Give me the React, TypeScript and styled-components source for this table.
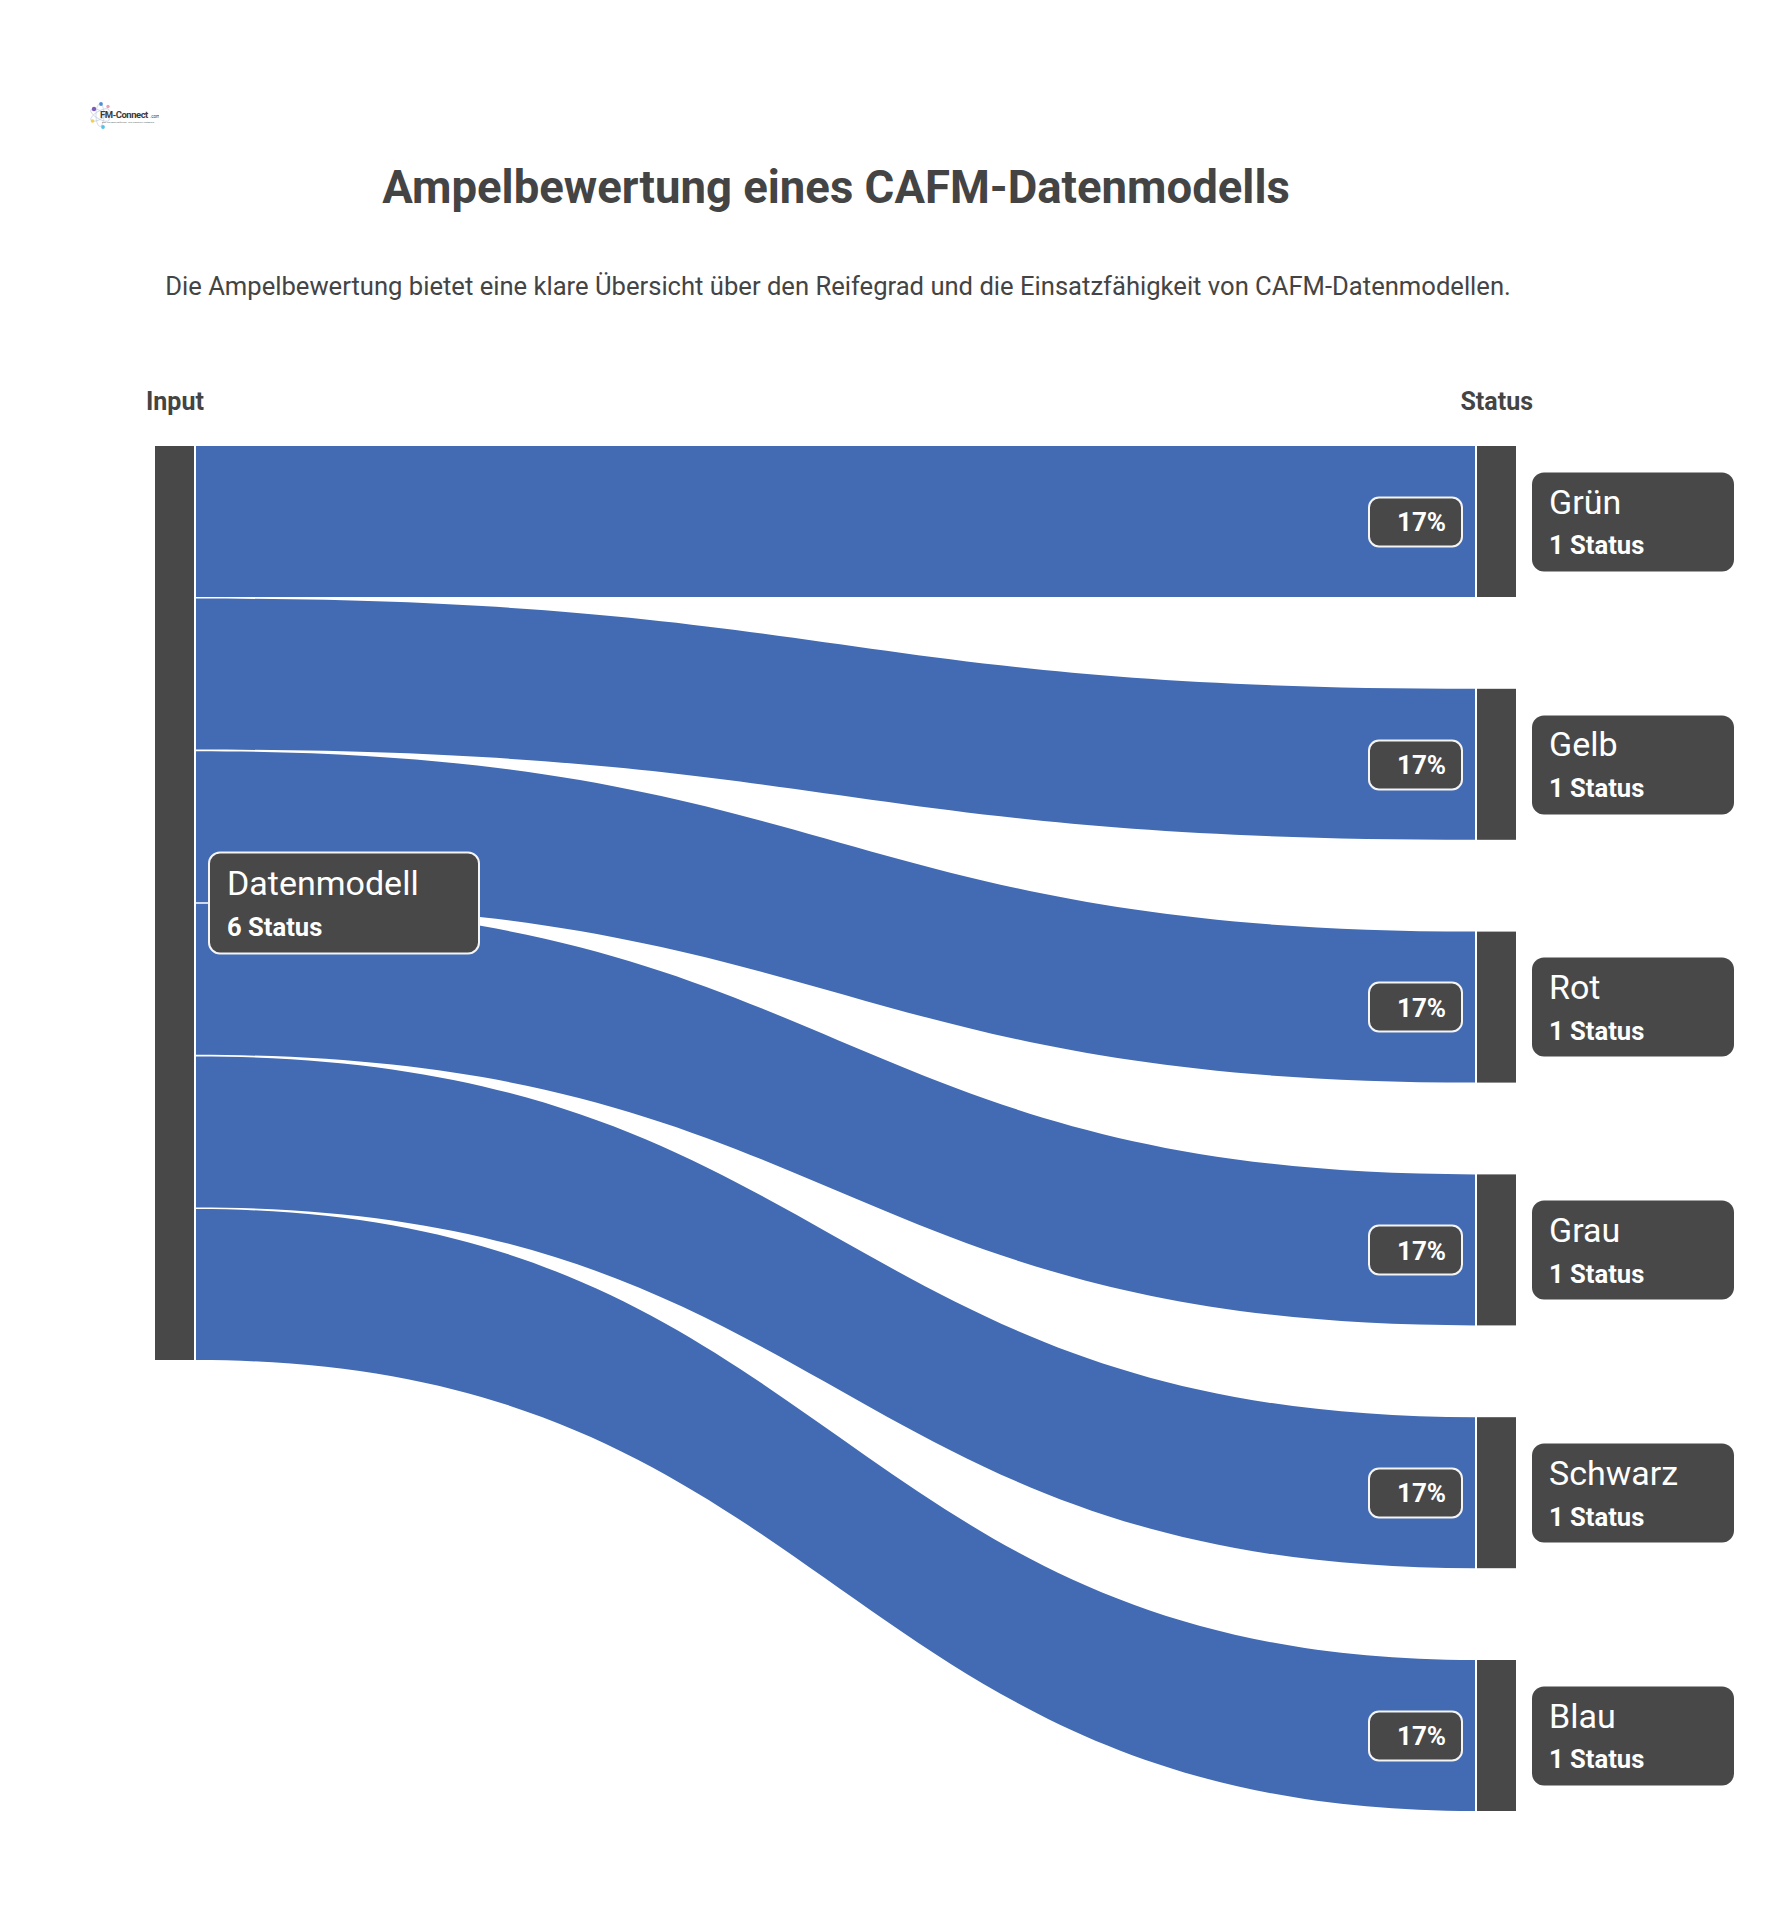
import styled, { createGlobalStyle } from "styled-components";

const GlobalStyle = createGlobalStyle`
  * {
    box-sizing: border-box;
  }
  body {
    margin: 0;
    background: #ffffff;
    font-family: Roboto, "Liberation Sans", Arial, sans-serif;
    color: #444444;
  }
`;

const BLUE = "#426bb3";
const DARK = "#484848";

const BAND_START = 196;
const BAND_END = 1475;
const BAND_HEIGHT = 151;
const LEFT_STEP = 152.6;
const RIGHT_STEP = 242.8;
const CHART_HEIGHT = 1365;

const statuses = [
  { name: "Grün", count: "1 Status", share: "17%" },
  { name: "Gelb", count: "1 Status", share: "17%" },
  { name: "Rot", count: "1 Status", share: "17%" },
  { name: "Grau", count: "1 Status", share: "17%" },
  { name: "Schwarz", count: "1 Status", share: "17%" },
  { name: "Blau", count: "1 Status", share: "17%" },
];

const Page = styled.div`
  width: 1790px;
  min-height: 1920px;
  padding-bottom: 110px;
`;

const LogoRow = styled.div`
  padding: 100px 0 0 89px;
  height: 132px;
`;

const Title = styled.h1`
  width: 1672px;
  margin: 29px 0 0;
  font-size: 45.5px;
  line-height: 1.2;
  font-weight: 700;
  text-align: center;
  color: #444444;
`;

const Subtitle = styled.p`
  width: 1676px;
  margin: 55px 0 0;
  font-size: 25.6px;
  line-height: 1.2;
  font-weight: 400;
  text-align: center;
  color: #444444;
`;

const ColumnLabels = styled.div`
  display: flex;
  justify-content: space-between;
  margin-top: 86px;
  padding: 0 257px 0 146px;
`;

const ColumnLabel = styled.span`
  font-size: 25px;
  line-height: 1.2;
  font-weight: 700;
  color: #444444;
`;

const Chart = styled.div`
  position: relative;
  margin-top: 29px;
  width: 1790px;
  height: ${CHART_HEIGHT}px;
`;

const Flows = styled.svg`
  display: block;
`;

const NodeBox = styled.div<{ $left: number; $top: number; $width: number; $height: number; $outlined?: boolean }>`
  position: absolute;
  left: ${(p) => p.$left}px;
  top: ${(p) => p.$top}px;
  width: ${(p) => p.$width}px;
  height: ${(p) => p.$height}px;
  transform: translateY(-50%);
  display: flex;
  flex-direction: column;
  justify-content: center;
  gap: 8px;
  padding: 0 17px 2px;
  background: ${DARK};
  border-radius: 12px;
  border: ${(p) => (p.$outlined ? "2px solid #f4f4f4" : "none")};
  color: #ffffff;
`;

const NodeName = styled.span`
  font-size: 34px;
  line-height: 1.2;
  font-weight: 400;
`;

const NodeCount = styled.span`
  font-size: 25.6px;
  line-height: 1.2;
  font-weight: 700;
`;

const SharePill = styled.div<{ $top: number }>`
  position: absolute;
  left: 1368px;
  top: ${(p) => p.$top}px;
  width: 95px;
  height: 51px;
  transform: translateY(-50%);
  display: flex;
  align-items: center;
  padding-left: 27px;
  background: ${DARK};
  border: 2px solid #f4f4f4;
  border-radius: 11px;
  color: #ffffff;
  font-size: 26px;
  font-weight: 700;
`;

const Logo = () => (
  <svg width="70" height="32" viewBox="0 0 70 32">
    <g fill="none" stroke="#c9d3e3" strokeWidth="0.8">
      <ellipse cx="11" cy="15" rx="10.5" ry="4" transform="rotate(-30 11 15)" />
      <ellipse cx="11" cy="15" rx="10.5" ry="4" transform="rotate(30 11 15)" />
      <ellipse cx="11" cy="15" rx="4" ry="11.5" />
    </g>
    <circle cx="5" cy="9" r="2.2" fill="#7b5cb8" />
    <circle cx="12" cy="4" r="1.9" fill="#4d8fd6" />
    <circle cx="19" cy="6.5" r="1.7" fill="#e8a3b5" />
    <circle cx="3.5" cy="21" r="1.8" fill="#f2d04a" />
    <circle cx="14" cy="27" r="1.9" fill="#56c1e8" />
    <text x="11" y="17.5" fontFamily="Roboto, sans-serif" fontSize="9.5" fontWeight="700" fill="#3c3c3c" letterSpacing="-0.5">
      FM-Connect
    </text>
    <text x="61" y="17.5" fontFamily="Roboto, sans-serif" fontSize="4.5" fill="#3c3c3c">
      .com
    </text>
    <text x="13" y="23" fontFamily="Roboto, sans-serif" fontSize="2.5" fill="#6a6a6a">
      Das FM-Beschaffungs- und Ingenieur-Netzwerk
    </text>
  </svg>
);

const flowPath = (leftTop: number, rightTop: number) => {
  const mid = (BAND_START + BAND_END) / 2;
  const lb = leftTop + BAND_HEIGHT;
  const rb = rightTop + BAND_HEIGHT;
  return [
    `M ${BAND_START} ${leftTop}`,
    `C ${mid} ${leftTop}, ${mid} ${rightTop}, ${BAND_END} ${rightTop}`,
    `L ${BAND_END} ${rb}`,
    `C ${mid} ${rb}, ${mid} ${lb}, ${BAND_START} ${lb}`,
    "Z",
  ].join(" ");
};

export const App = () => {
  const inputHeight = LEFT_STEP * (statuses.length - 1) + BAND_HEIGHT;

  return (
    <Page>
      <GlobalStyle />
      <LogoRow>
        <Logo />
      </LogoRow>
      <Title>Ampelbewertung eines CAFM-Datenmodells</Title>
      <Subtitle>
        Die Ampelbewertung bietet eine klare Übersicht über den Reifegrad und die Einsatzfähigkeit von
        CAFM-Datenmodellen.
      </Subtitle>
      <ColumnLabels>
        <ColumnLabel>Input</ColumnLabel>
        <ColumnLabel>Status</ColumnLabel>
      </ColumnLabels>
      <Chart>
        <Flows width={1790} height={CHART_HEIGHT} viewBox={`0 0 1790 ${CHART_HEIGHT}`}>
          {statuses.map((s, i) => (
            <path key={s.name} d={flowPath(i * LEFT_STEP, i * RIGHT_STEP)} fill={BLUE} />
          ))}
          <rect x={155} y={0} width={39} height={inputHeight} fill={DARK} />
          {statuses.map((s, i) => (
            <rect key={s.name} x={1477} y={i * RIGHT_STEP} width={39} height={BAND_HEIGHT} fill={DARK} />
          ))}
        </Flows>

        <NodeBox $left={208} $top={inputHeight / 2} $width={272} $height={103} $outlined>
          <NodeName>Datenmodell</NodeName>
          <NodeCount>6 Status</NodeCount>
        </NodeBox>

        {statuses.map((s, i) => {
          const center = i * RIGHT_STEP + BAND_HEIGHT / 2;
          return (
            <div key={s.name}>
              <SharePill $top={center}>{s.share}</SharePill>
              <NodeBox $left={1532} $top={center} $width={202} $height={99}>
                <NodeName>{s.name}</NodeName>
                <NodeCount>{s.count}</NodeCount>
              </NodeBox>
            </div>
          );
        })}
      </Chart>
    </Page>
  );
};

export default App;
